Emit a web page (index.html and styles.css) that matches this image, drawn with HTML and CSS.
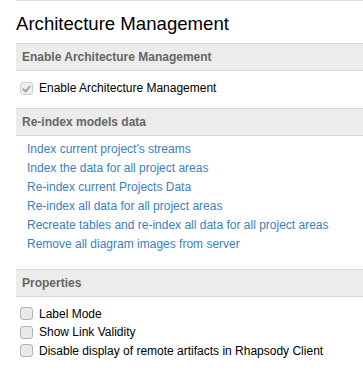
FILE: index.html
```html
<!DOCTYPE html>
<html lang="en">
<head>
    <meta charset="UTF-8">
    <title>Architecture Management</title>
    <link rel="stylesheet" href="styles.css">
</head>
<body>
    <div class="page">
        <h1 class="title">Architecture Management</h1>

        <div class="section">
            <div class="section-header">Enable Architecture Management</div>
            <div class="section-body options first">
                <label class="option">
                    <span class="box checked disabled"></span>
                    <span>Enable Architecture Management</span>
                </label>
            </div>
        </div>

        <div class="section">
            <div class="section-header">Re-index models data</div>
            <div class="section-body links">
                <a href="#">Index current project's streams</a>
                <a href="#">Index the data for all project areas</a>
                <a href="#">Re-index current Projects Data</a>
                <a href="#">Re-index all data for all project areas</a>
                <a href="#">Recreate tables and re-index all data for all project areas</a>
                <a href="#">Remove all diagram images from server</a>
            </div>
        </div>

        <div class="section">
            <div class="section-header">Properties</div>
            <div class="section-body options props">
                <label class="option">
                    <span class="box"></span>
                    <span>Label Mode</span>
                </label>
                <label class="option">
                    <span class="box"></span>
                    <span>Show Link Validity</span>
                </label>
                <label class="option">
                    <span class="box"></span>
                    <span>Disable display of remote artifacts in Rhapsody Client</span>
                </label>
            </div>
        </div>
    </div>
</body>
</html>
```

FILE: styles.css
```css
body {
    margin: 0;
    font-family: "Liberation Sans", Arial, sans-serif;
    font-size: 12px;
    color: #000000;
    background-color: #ffffff;
}
.page {
    margin-left: 16px;
    border-top: 1px solid #dcdcdc;
}
.title {
    margin: 11px 0 0 0;
    font-size: 18.6px;
    font-weight: normal;
    line-height: 24px;
    height: 31px;
}
.section-header {
    height: 26px;
    line-height: 26px;
    padding-left: 6px;
    background-color: #ececec;
    border-top: 1px solid #d9d9d9;
    border-bottom: 1px solid #d9d9d9;
    color: #666666;
    font-weight: bold;
    font-size: 12px;
}
.section-body {
    display: flex;
    flex-direction: column;
}
.options.first {
    padding: 8px 0 10px 4px;
}
.options.props {
    padding: 8px 0 0 4px;
}
.option {
    display: flex;
    align-items: center;
    gap: 6px;
    height: 18.5px;
}
.box {
    width: 11px;
    height: 11px;
    border: 1px solid #b3b3b3;
    border-radius: 3px;
    background-color: #e9e9e9;
    position: relative;
}
.box.checked::after {
    content: "";
    position: absolute;
    left: 3px;
    top: 1px;
    width: 3px;
    height: 6px;
    border-right: 2px solid #a6a6a6;
    border-bottom: 2px solid #a6a6a6;
    transform: rotate(40deg);
}
.box.disabled {
    border-color: #cfcfcf;
    background-color: #f0f0f0;
}
.links {
    padding: 4px 0 15px 11px;
}
.links a {
    color: #3a7fc1;
    text-decoration: none;
    line-height: 19px;
}
```
